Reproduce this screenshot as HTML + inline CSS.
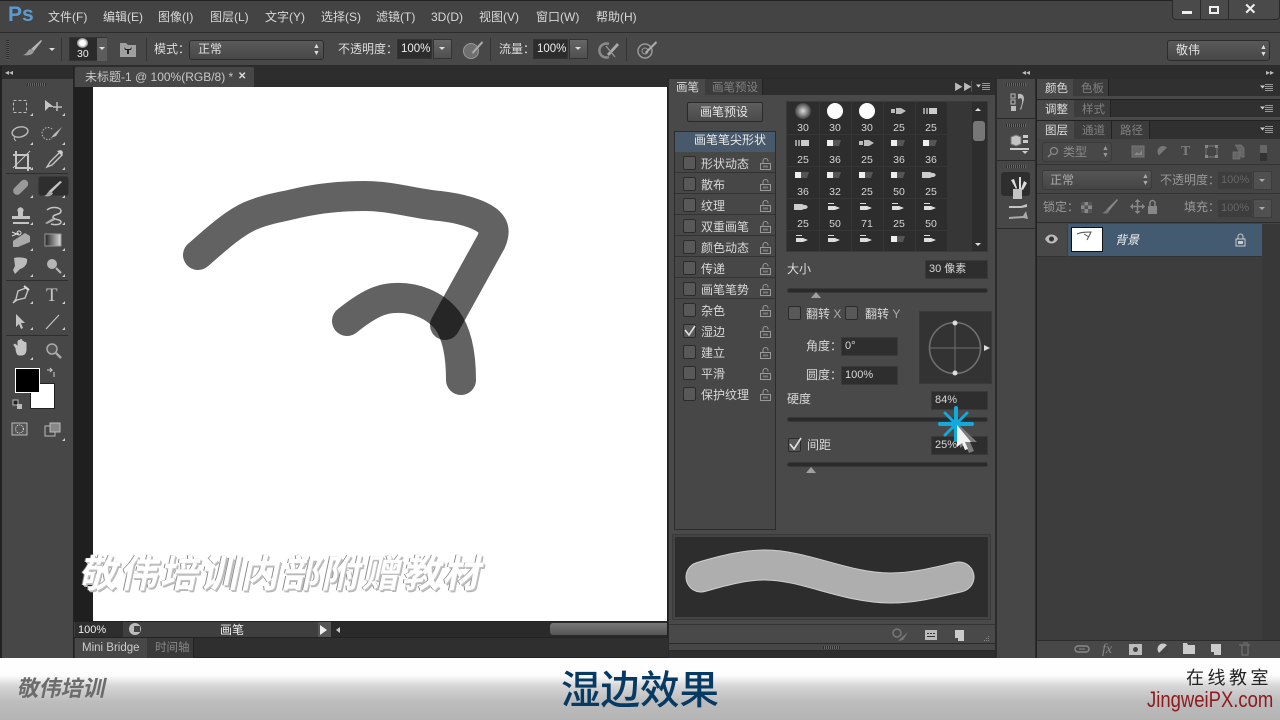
<!DOCTYPE html>
<html><head><meta charset="utf-8"><style>
*{box-sizing:border-box}
html,body{margin:0;padding:0;width:1280px;height:720px;overflow:hidden;background:#474747}
body{position:relative;font-family:"Liberation Sans","Noto Sans CJK SC",sans-serif;font-size:12px;color:#d8d8d8}
.b,.t{position:absolute}
.t{white-space:nowrap;line-height:16px}
.cb{position:absolute;width:13px;height:14px;background:#585858;border:1px solid #2b2b2b;border-radius:2px}
.inp{position:absolute;background:#2e2e2e;border:1px solid #3a3a3a;color:#d8d8d8;padding-left:3px;line-height:17px;font-size:11px;white-space:nowrap}
.sl{position:absolute;height:5px;background:#2a2a2a;border-radius:3px;border:1px solid #383838}
.thumb{position:absolute;width:0;height:0;border-left:5px solid transparent;border-right:5px solid transparent;border-bottom:6px solid #a0a0a0}
svg{position:absolute;overflow:visible}
.lbl{position:absolute;font-size:10.5px;color:#d5d5d5;width:32px;text-align:center;line-height:12px}
.row{position:absolute;left:675px;width:100px;height:21px;border-bottom:1px solid #333}
</style></head><body>

<!-- menu bar -->
<div class="b" style="left:0;top:0;width:1280px;height:33px;background:#444;border-top:1px solid #222;border-bottom:1px solid #2c2c2c"></div>
<div class="t" style="left:8px;top:3px;font-size:21px;line-height:24px;font-weight:bold;color:#5c9bd0">Ps</div>
<div class="t" style="left:48px;top:9px">文件(F)</div>
<div class="t" style="left:103px;top:9px">编辑(E)</div>
<div class="t" style="left:158px;top:9px">图像(I)</div>
<div class="t" style="left:210px;top:9px">图层(L)</div>
<div class="t" style="left:265px;top:9px">文字(Y)</div>
<div class="t" style="left:321px;top:9px">选择(S)</div>
<div class="t" style="left:376px;top:9px">滤镜(T)</div>
<div class="t" style="left:431px;top:9px">3D(D)</div>
<div class="t" style="left:479px;top:9px">视图(V)</div>
<div class="t" style="left:536px;top:9px">窗口(W)</div>
<div class="t" style="left:596px;top:9px">帮助(H)</div>
<div class="b" style="left:1172px;top:0;width:108px;height:20px;background:#4a4a4a;border:1px solid #2a2a2a;border-top:0;border-radius:0 0 4px 4px"></div>
<div class="b" style="left:1200px;top:0;width:1px;height:19px;background:#2a2a2a"></div>
<div class="b" style="left:1228px;top:0;width:1px;height:19px;background:#2a2a2a"></div>
<div class="b" style="left:1182px;top:11px;width:10px;height:3px;background:#eee"></div>
<div class="b" style="left:1209px;top:6px;width:10px;height:8px;border:2px solid #eee"></div>
<div class="t" style="left:1244px;top:2px;font-size:15px;font-weight:bold;color:#eee">✕</div>

<!-- options bar -->
<div class="b" style="left:0;top:33px;width:1280px;height:33px;background:#484848;border-bottom:1px solid #2c2c2c"></div>
<div class="b" style="left:6px;top:40px;width:3px;height:20px;background:repeating-linear-gradient(#2e2e2e 0 1px,#555 1px 2px)"></div>
<svg style="left:0;top:0" width="60" height="66"><path d="M41 40 L31 49 L34 51 L42 41Z" fill="#b5b5b5"/><path d="M30 49 C27 51 27 54 23 55 C28 56 33 55 34 51Z" fill="#9a9a9a"/><path d="M49 48h6l-3 3z" fill="#ddd"/></svg>
<div class="b" style="left:61px;top:38px;width:1px;height:23px;background:#333"></div>
<div class="b" style="left:69px;top:37px;width:38px;height:24px;background:#2a2a2a;border:1px solid #333"></div>
<div class="b" style="left:97px;top:38px;width:10px;height:23px;background:#5c5c5c"></div>
<div class="b" style="left:99px;top:47px;border-left:3px solid transparent;border-right:3px solid transparent;border-top:3px solid #ddd"></div>
<div class="b" style="left:77px;top:38px;width:11px;height:10px;border-radius:50%;background:radial-gradient(#fff 35%,#888 70%,transparent)"></div>
<div class="t" style="left:77px;top:47px;font-size:10.5px;line-height:14px;color:#eee">30</div>
<svg style="left:120px;top:41px" width="16" height="16"><path d="M0 2h6l2 2h8v12H0z" fill="#a0a0a0"/><path d="M4 6l1 3h2v4h2V9h2l1-3-2 2H6z" fill="#222"/></svg>
<div class="b" style="left:146px;top:38px;width:1px;height:23px;background:#333"></div>
<div class="t" style="left:154px;top:41px;color:#ddd">模式：</div>
<div class="b" style="left:189px;top:40px;width:135px;height:20px;background:linear-gradient(#5a5a5a,#474747);border:1px solid #2c2c2c;border-radius:3px"></div>
<div class="t" style="left:198px;top:41px;color:#e0e0e0">正常</div>
<div class="t" style="left:313px;top:43px;font-size:7px;line-height:7px;color:#ddd">▲</div>
<div class="t" style="left:313px;top:50px;font-size:7px;line-height:7px;color:#ddd">▼</div>
<div class="t" style="left:338px;top:41px;color:#ddd">不透明度：</div>
<div class="b" style="left:397px;top:39px;width:35px;height:20px;background:#2c2c2c;border:1px solid #333;line-height:18px;padding-left:3px;font-size:11.5px;color:#eee">100%</div>
<div class="b" style="left:433px;top:39px;width:19px;height:20px;background:linear-gradient(#666,#505050);border:1px solid #333"></div>
<div class="b" style="left:439px;top:47px;border-left:3.5px solid transparent;border-right:3.5px solid transparent;border-top:3px solid #ddd"></div>
<svg style="left:462px;top:40px" width="22" height="20"><circle cx="9" cy="11" r="7.5" fill="#6f6f6f" stroke="#999"/><path d="M20 1L10 12l1 2 10-11z" fill="#aaa"/></svg>
<div class="b" style="left:490px;top:38px;width:1px;height:23px;background:#333"></div>
<div class="t" style="left:499px;top:41px;color:#ddd">流量：</div>
<div class="b" style="left:533px;top:39px;width:35px;height:20px;background:#2c2c2c;border:1px solid #333;line-height:18px;padding-left:3px;font-size:11.5px;color:#eee">100%</div>
<div class="b" style="left:569px;top:39px;width:19px;height:20px;background:linear-gradient(#666,#505050);border:1px solid #333"></div>
<div class="b" style="left:575px;top:47px;border-left:3.5px solid transparent;border-right:3.5px solid transparent;border-top:3px solid #ddd"></div>
<svg style="left:598px;top:40px" width="22" height="20"><path d="M11 4a7 7 0 1 0 0 13" fill="none" stroke="#8a8a8a" stroke-width="2.5"/><path d="M19 3L9 14l2 2 10-11z" fill="#aaa"/><path d="M8 6l9 11" fill="none" stroke="#999" stroke-width="1.2"/></svg>
<div class="b" style="left:626px;top:38px;width:1px;height:23px;background:#333"></div>
<svg style="left:636px;top:40px" width="22" height="20"><circle cx="9" cy="11" r="7" fill="none" stroke="#999" stroke-width="1.5"/><circle cx="9" cy="11" r="3" fill="none" stroke="#999"/><path d="M20 1L9 12l1 2 11-11z" fill="#aaa"/></svg>
<div class="b" style="left:1167px;top:40px;width:103px;height:21px;background:linear-gradient(#5a5a5a,#474747);border:1px solid #2c2c2c;border-radius:3px"></div>
<div class="t" style="left:1176px;top:42px;color:#e0e0e0">敬伟</div>
<div class="t" style="left:1260px;top:44px;font-size:7px;line-height:7px;color:#ddd">▲</div>
<div class="t" style="left:1260px;top:51px;font-size:7px;line-height:7px;color:#ddd">▼</div>

<!-- doc area -->
<div class="b" style="left:0;top:66px;width:1280px;height:592px;background:#1f1f1f"></div>
<div class="b" style="left:74px;top:66px;width:922px;height:21px;background:#2d2d2d"></div>
<div class="b" style="left:75px;top:67px;width:179px;height:20px;background:#474747;border-radius:2px 2px 0 0"></div>
<div class="t" style="left:85px;top:69px;color:#c8c8c8">未标题-1 @ 100%(RGB/8) *</div>
<div class="t" style="left:238px;top:69px;font-size:10px;color:#ddd;font-weight:bold">✕</div>
<div class="b" style="left:93px;top:87px;width:574px;height:535px;background:#fff"></div>
<svg style="left:0;top:0" width="1280" height="720">
<g fill="none" stroke-linecap="round" stroke-linejoin="round" stroke-width="30" style="isolation:isolate">
<path style="mix-blend-mode:multiply" stroke="#626262" d="M198 255C212 243 232 224 250 216C266 209 282 207 298 203C320 198 342 196 365 196C392 196 416 204 440 206C458 208 478 213 488 221C495 227 495 233 491 242L445 325"/>
<path style="mix-blend-mode:multiply" stroke="#626262" d="M347 321C362 309 378 298 395 298C415 297 435 305 447 320C458 335 461 358 461 380"/>
</g></svg>
<div class="t" style="left:81px;top:551px;font-size:38px;line-height:48px;font-weight:bold;letter-spacing:2.4px;color:#fff;transform:skewX(-12deg);text-shadow:1px 1px 0 #c4c4c4,2px 2px 0 #b4b4b4,-1px 0 0 #8a8a8a">敬伟培训内部附赠教材</div>

<!-- status bar -->
<div class="b" style="left:74px;top:621px;width:593px;height:17px;background:#3f3f3f;border-top:1px solid #222;border-bottom:1px solid #222"></div>
<div class="b" style="left:75px;top:622px;width:48px;height:15px;background:#2e2e2e"></div>
<div class="t" style="left:78px;top:623px;font-size:11px;line-height:15px;color:#eee">100%</div>
<div class="b" style="left:129px;top:623px;width:12px;height:12px;border-radius:50%;background:#bdbdbd"></div>
<div class="b" style="left:134px;top:626px;width:6px;height:6px;background:#444"></div>
<div class="t" style="left:220px;top:622px;color:#eee">画笔</div>
<div class="b" style="left:318px;top:622px;width:13px;height:15px;background:#555"></div>
<div class="b" style="left:320px;top:625px;border-top:5px solid transparent;border-bottom:5px solid transparent;border-left:7px solid #eee"></div>
<div class="b" style="left:331px;top:622px;width:336px;height:15px;background:#2a2a2a"></div>
<div class="b" style="left:336px;top:627px;border-top:3px solid transparent;border-bottom:3px solid transparent;border-right:4px solid #ccc"></div>
<div class="b" style="left:550px;top:623px;width:117px;height:12px;background:linear-gradient(#777,#555);border-radius:3px 0 0 3px"></div>
<div class="b" style="left:74px;top:638px;width:922px;height:20px;background:#2f2f2f;border-bottom:1px solid #222"></div>
<div class="b" style="left:75px;top:638px;width:72px;height:20px;background:#474747"></div>
<div class="t" style="left:82px;top:641px;font-size:11.5px;line-height:15px;color:#ccc">Mini Bridge</div>
<div class="b" style="left:147px;top:638px;width:47px;height:20px;background:#3a3a3a;border-right:1px solid #222"></div>
<div class="t" style="left:155px;top:641px;font-size:11.5px;line-height:15px;color:#888">时间轴</div>

<!-- toolbar -->
<div class="b" style="left:0;top:66px;width:74px;height:592px;background:#474747;border-right:1px solid #222"></div>
<div class="b" style="left:0;top:66px;width:73px;height:13px;background:#2d2d2d"></div>
<div class="b" style="left:0;top:66px;width:2px;height:592px;background:#222"></div>
<div class="t" style="left:5px;top:67px;font-size:8px;line-height:11px;color:#bbb">◂◂</div>
<div class="b" style="left:27px;top:83px;width:19px;height:3px;background:repeating-linear-gradient(90deg,#2e2e2e 0 1px,#666 1px 2px)"></div>
<div class="b" style="left:38px;top:176px;width:31px;height:20px;background:#2e2e2e;border-radius:3px;border:1px solid #3a3a3a"></div>
<div class="b" style="left:6px;top:173px;width:62px;height:1px;background:#2e2e2e"></div>
<div class="b" style="left:6px;top:280px;width:62px;height:1px;background:#2e2e2e"></div>
<div class="b" style="left:6px;top:335px;width:62px;height:1px;background:#2e2e2e"></div>
<svg style="left:0;top:0" width="74" height="660">
<rect x="13.500" y="100.500" width="13" height="12" fill="none" stroke="#bbb" stroke-dasharray="3 2"/>
<path d="M45 100l9 7h-5l-4 4z" fill="#c4c4c4"/><path d="M57 102v9M53 107h9" stroke="#bbb" stroke-width="1.5"/>
<ellipse cx="20" cy="132" rx="8" ry="5" fill="none" stroke="#bbb" stroke-width="1.4" transform="rotate(-12 20 132)"/><path d="M15 136q-2 3 1 5" fill="none" stroke="#bbb"/>
<path d="M52 129a6 6 0 1 0 0 9" fill="none" stroke="#bbb" stroke-dasharray="1.5 1.5"/><path d="M62 127l-8 7-3 4 5-2z" fill="#bbb"/>
<path d="M16 151v17h15M13 155h15v16" fill="none" stroke="#c4c4c4" stroke-width="2"/><path d="M13 168l17-17" stroke="#c4c4c4"/>
<path d="M60 152l-10 10-3 5 5-2 10-10z" fill="none" stroke="#c4c4c4" stroke-width="1.4"/><path d="M57 151l4-1 2 2-1 4z" fill="#ccc"/>
<rect x="12" y="184" width="18" height="8" rx="4" transform="rotate(-45 20 188)" fill="#999"/>
<path d="M60 181L49 191l2 2 11-11z" fill="#c4c4c4"/><path d="M49 191c-2 2-2 4-5 5 4 1 8 0 9-3z" fill="#aaa"/>
<path d="M13 222h16v2H13zM12 216h18v3H12z" fill="#c4c4c4"/><path d="M18 216v-4a3 3 0 1 1 5 0v4z" fill="#c4c4c4"/>
<path d="M47 210c4-4 14-3 14 1s-8 3-8 6 8 2 8 5-6 3-10 2" fill="none" stroke="#c4c4c4" stroke-width="1.5"/><path d="M53 218l-8 5 2 1 8-4z" fill="#aaa"/>
<path d="M13 241l12-8 5 3v6l-12 5h-5z" fill="#aaa"/><path d="M12 232l7 3M12 236l7-3" stroke="#ddd"/><circle cx="19" cy="233" r="2" fill="none" stroke="#ddd"/>
<defs><linearGradient id="g" x1="0" x2="1"><stop offset="0" stop-color="#222"/><stop offset="1" stop-color="#ddd"/></linearGradient></defs>
<rect x="45" y="234" width="16" height="12" fill="url(#g)" stroke="#999"/>
<path d="M14 258c3-1 10-1 13 1 1 5-3 9-7 10l-5 5-2-4 2-4z" fill="#bbb"/>
<circle cx="52" cy="264" r="5" fill="#b5b5b5"/><path d="M56 268l5 5" stroke="#bbb" stroke-width="2"/>
<path d="M26 288l2 2-3 8-8 2-4 3 3-4 2-8z" fill="none" stroke="#c4c4c4" stroke-width="1.4"/><path d="M24 286l5 4" stroke="#ddd" stroke-width="2"/>
<path d="M16 314l9 9h-4l2 5-2 1-2-5-3 3z" fill="#c4c4c4"/>
<path d="M46 329l13-14" stroke="#c4c4c4" stroke-width="1.2"/>
<path d="M16 348l-2-3c0-1 1-1 2 0l2 2v-5c0-2 2-2 2 0v-1c0-2 2-2 2 0v1c0-1 2-1 2 1 1-1 2-1 2 1v6c0 3-2 5-4 5h-3c-2 0-3-4-3-7z" fill="#c4c4c4" stroke="#c4c4c4"/>
<circle cx="52" cy="349" r="5" fill="#555" stroke="#aaa" stroke-width="1.5"/><path d="M56 353l5 5" stroke="#aaa" stroke-width="2.4"/>
<path d="M47 370h5l-2-2m2 2l-2 2M54 377v-5" fill="none" stroke="#ccc" stroke-width="1"/>
<rect x="13" y="400" width="5" height="5" fill="#222" stroke="#bbb"/><rect x="17" y="404" width="5" height="5" fill="#bbb"/>
<rect x="12" y="423" width="15" height="12" fill="#555" stroke="#bbb"/><circle cx="19.500" cy="429" r="4" fill="none" stroke="#ddd" stroke-dasharray="1 1"/>
<rect x="45" y="426" width="10" height="10" fill="none" stroke="#bbb"/><rect x="50" y="423" width="10" height="9" fill="#888" stroke="#bbb"/>
<g fill="#ccc"><path d="M33 116h-3l3-3zM65 116h-3l3-3zM33 145h-3l3-3zM65 145h-3l3-3zM33 170h-3l3-3zM65 170h-3l3-3zM33 198h-3l3-3zM65 198h-3l3-3zM33 225h-3l3-3zM65 225h-3l3-3zM33 251h-3l3-3zM65 251h-3l3-3zM33 277h-3l3-3zM65 277h-3l3-3zM33 304h-3l3-3zM65 304h-3l3-3zM33 330h-3l3-3zM65 330h-3l3-3zM33 360h-3l3-3zM65 441h-3l3-3z"/></g>
</svg>
<div class="t" style="left:46px;top:286px;font-family:'Liberation Serif',serif;font-size:19px;line-height:20px;color:#c4c4c4">T</div>
<div class="b" style="left:30px;top:383px;width:25px;height:26px;background:#fff;border:1px solid #222"></div>
<div class="b" style="left:15px;top:368px;width:25px;height:25px;background:#000;border:1px solid #fff"></div>

<!-- brush panel -->
<div class="b" style="left:668px;top:78px;width:328px;height:580px;background:#494949;border:1px solid #2a2a2a"></div>
<div class="b" style="left:669px;top:79px;width:326px;height:16px;background:#2e2e2e"></div>
<div class="b" style="left:669px;top:79px;width:36px;height:16px;background:#494949"></div>
<div class="b" style="left:705px;top:79px;width:58px;height:16px;background:#3c3c3c;border-right:1px solid #222"></div>
<div class="t" style="left:676px;top:80px;font-size:11.5px;color:#ddd">画笔</div>
<div class="t" style="left:712px;top:80px;font-size:11.5px;color:#808080">画笔预设</div>
<div class="t" style="left:954px;top:81px;font-size:9px;line-height:12px;color:#bbb">▶▶</div>
<div class="b" style="left:971px;top:81px;width:1px;height:11px;background:#555"></div>
<svg style="left:976px;top:82px" width="16" height="10"><path d="M0 2.500h5l-2.500 3z" fill="#ccc"/><path d="M6 1.500h8M6 3.500h8M6 5.500h8M6 7.500h8" stroke="#bbb" stroke-width=".8"/></svg>

<div class="b" style="left:687px;top:102px;width:76px;height:20px;background:linear-gradient(#5e5e5e,#4a4a4a);border:1px solid #2a2a2a;border-radius:2px"></div>
<div class="t" style="left:700px;top:104px;color:#e4e4e4">画笔预设</div>

<div class="b" style="left:674px;top:131px;width:102px;height:399px;background:#474747;border:1px solid #2c2c2c"></div>
<div class="b" style="left:675px;top:132px;width:100px;height:20px;background:#47596b"></div>
<div class="t" style="left:694px;top:132px;color:#e8e8e8">画笔笔尖形状</div>
<div class="row" style="top:152px"></div><div class="row" style="top:173px"></div><div class="row" style="top:194px"></div><div class="row" style="top:215px"></div><div class="row" style="top:236px"></div><div class="row" style="top:257px"></div><div class="row" style="top:278px"></div>

<div class="cb" style="left:683px;top:156px"></div><div class="t" style="left:701px;top:156px">形状动态</div>
<div class="cb" style="left:683px;top:177px"></div><div class="t" style="left:701px;top:177px">散布</div>
<div class="cb" style="left:683px;top:198px"></div><div class="t" style="left:701px;top:198px">纹理</div>
<div class="cb" style="left:683px;top:219px"></div><div class="t" style="left:701px;top:219px">双重画笔</div>
<div class="cb" style="left:683px;top:240px"></div><div class="t" style="left:701px;top:240px">颜色动态</div>
<div class="cb" style="left:683px;top:261px"></div><div class="t" style="left:701px;top:261px">传递</div>
<div class="cb" style="left:683px;top:282px"></div><div class="t" style="left:701px;top:282px">画笔笔势</div>
<div class="cb" style="left:683px;top:303px"></div><div class="t" style="left:701px;top:303px">杂色</div>
<div class="cb" style="left:683px;top:324px"></div><div class="t" style="left:701px;top:324px">湿边</div>
<div class="cb" style="left:683px;top:345px"></div><div class="t" style="left:701px;top:345px">建立</div>
<div class="cb" style="left:683px;top:366px"></div><div class="t" style="left:701px;top:366px">平滑</div>
<div class="cb" style="left:683px;top:387px"></div><div class="t" style="left:701px;top:387px">保护纹理</div>
<svg style="left:0;top:0" width="1000" height="660">
<defs><g id="lk"><rect x=".5" y="5.500" width="10" height="6" fill="none" stroke="#999"/><path d="M3 5.500V3a2.500 2.500 0 0 1 5 0v.5" fill="none" stroke="#999"/><rect x="3" y="7.500" width="5" height="2" fill="#777"/></g></defs>
<use href="#lk" x="760" y="158"/><use href="#lk" x="760" y="179"/><use href="#lk" x="760" y="200"/><use href="#lk" x="760" y="221"/><use href="#lk" x="760" y="242"/><use href="#lk" x="760" y="263"/><use href="#lk" x="760" y="284"/><use href="#lk" x="760" y="305"/><use href="#lk" x="760" y="326"/><use href="#lk" x="760" y="347"/><use href="#lk" x="760" y="368"/><use href="#lk" x="760" y="389"/>
<path d="M685 330l4 5 6-9" fill="none" stroke="#ddd" stroke-width="1.6"/>
</svg>

<!-- brush grid -->
<div class="b" style="left:786px;top:101px;width:202px;height:151px;background:#2d2d2d;border:1px solid #3a3a3a"></div>
<div class="b" style="left:947px;top:102px;width:25px;height:149px;background:#363636"></div>
<div class="b" style="left:973px;top:121px;width:12px;height:20px;background:#777;border-radius:3px"></div>
<div class="b" style="left:975px;top:108px;border-left:3px solid transparent;border-right:3px solid transparent;border-bottom:3px solid #ddd"></div>
<div class="b" style="left:975px;top:243px;border-left:3.5px solid transparent;border-right:3.5px solid transparent;border-top:3.5px solid #ddd"></div>
<svg style="left:0;top:0" width="1000" height="260">
<g stroke="#363636"><path d="M787 134.500h160M787 166.500h160M787 198.500h160M787 230.500h160M819.500 102v149M851.500 102v149M883.500 102v149M915.500 102v149"/></g>
<defs><radialGradient id="sf"><stop offset="0" stop-color="#ddd"/><stop offset="1" stop-color="#444"/></radialGradient>
<g id="p1"><path d="M-8-2h4v4h-4zM-3-3h5l5 3-5 3h-5z" fill="#bbb"/></g>
<g id="p2"><path d="M-8-3h2v6h-2zM-5-3h2v6h-2z" fill="#999"/><rect x="-2" y="-3" width="8" height="6" fill="#ccc"/></g>
<g id="p3"><path d="M-8-3h6v6h-6z" fill="#eee"/><path d="M-2-3h8l-2 6h-6z" fill="#555"/></g>
<g id="p4"><path d="M-9-3h8l2 1h2l2 2-2 2h-2l-2 1h-8z" fill="#ccc"/></g>
<g id="p5"><path d="M-7-4h6v1h-6zM-7-1h7l5 2-5 2h-7z" fill="#ddd"/></g></defs>
<circle cx="803" cy="111" r="8" fill="url(#sf)"/><circle cx="835" cy="111" r="8" fill="#fff"/><circle cx="867" cy="111" r="8" fill="#fff"/>
<use href="#p1" x="899" y="111"/><use href="#p2" x="931" y="111"/>
<use href="#p2" x="803" y="143"/><use href="#p3" x="835" y="143"/><use href="#p1" x="867" y="143"/><use href="#p3" x="899" y="143"/><use href="#p3" x="931" y="143"/>
<use href="#p3" x="803" y="175"/><use href="#p3" x="835" y="175"/><use href="#p3" x="867" y="175"/><use href="#p3" x="899" y="175"/><use href="#p4" x="931" y="175"/>
<use href="#p4" x="803" y="207"/><use href="#p5" x="835" y="207"/><use href="#p5" x="867" y="207"/><use href="#p5" x="899" y="207"/><use href="#p5" x="931" y="207"/>
<use href="#p5" x="803" y="239"/><use href="#p5" x="835" y="239"/><use href="#p5" x="867" y="239"/><use href="#p3" x="899" y="239"/><use href="#p5" x="931" y="239"/>
</svg>
<div class="lbl" style="left:787px;top:122px">30</div><div class="lbl" style="left:819px;top:122px">30</div><div class="lbl" style="left:851px;top:122px">30</div><div class="lbl" style="left:883px;top:122px">25</div><div class="lbl" style="left:915px;top:122px">25</div>
<div class="lbl" style="left:787px;top:154px">25</div><div class="lbl" style="left:819px;top:154px">36</div><div class="lbl" style="left:851px;top:154px">25</div><div class="lbl" style="left:883px;top:154px">36</div><div class="lbl" style="left:915px;top:154px">36</div>
<div class="lbl" style="left:787px;top:186px">36</div><div class="lbl" style="left:819px;top:186px">32</div><div class="lbl" style="left:851px;top:186px">25</div><div class="lbl" style="left:883px;top:186px">50</div><div class="lbl" style="left:915px;top:186px">25</div>
<div class="lbl" style="left:787px;top:218px">25</div><div class="lbl" style="left:819px;top:218px">50</div><div class="lbl" style="left:851px;top:218px">71</div><div class="lbl" style="left:883px;top:218px">25</div><div class="lbl" style="left:915px;top:218px">50</div>

<!-- brush settings -->
<div class="t" style="left:787px;top:261px;color:#ddd">大小</div>
<div class="inp" style="left:925px;top:260px;width:63px;height:19px">30 像素</div>
<div class="sl" style="left:787px;top:288px;width:201px"></div><div class="thumb" style="left:811px;top:292px"></div>
<div class="cb" style="left:788px;top:306px"></div><div class="t" style="left:806px;top:306px">翻转 <span style="color:#aaa">X</span></div>
<div class="cb" style="left:845px;top:306px"></div><div class="t" style="left:865px;top:306px">翻转 <span style="color:#aaa">Y</span></div>
<div class="b" style="left:919px;top:311px;width:73px;height:73px;background:#333;border:1px solid #3a3a3a"></div>
<svg style="left:919px;top:311px" width="73" height="73"><circle cx="36" cy="37" r="25.500" fill="none" stroke="#6f6f6f" stroke-width="1.6"/><path d="M11 37h50M36 12v50" stroke="#6f6f6f"/><circle cx="36" cy="12" r="2.500" fill="#ddd"/><circle cx="36" cy="62" r="2.500" fill="#ddd"/><path d="M65 34l6 3-6 3z" fill="#ddd"/></svg>
<div class="t" style="left:806px;top:338px">角度：</div><div class="inp" style="left:841px;top:337px;width:57px;height:19px">0°</div>
<div class="t" style="left:806px;top:367px">圆度：</div><div class="inp" style="left:841px;top:366px;width:57px;height:19px">100%</div>
<div class="t" style="left:787px;top:391px">硬度</div><div class="inp" style="left:931px;top:391px;width:57px;height:19px">84%</div>
<div class="sl" style="left:787px;top:417px;width:201px"></div>
<div class="cb" style="left:788px;top:438px"></div>
<svg style="left:788px;top:436px" width="16" height="16"><path d="M2 8l4 5 7-11" fill="none" stroke="#ddd" stroke-width="1.7"/></svg>
<div class="t" style="left:807px;top:437px">间距</div><div class="inp" style="left:931px;top:436px;width:57px;height:19px">25%</div>
<div class="sl" style="left:787px;top:462px;width:201px"></div><div class="thumb" style="left:806px;top:467px"></div>
<svg style="left:930px;top:400px" width="60" height="60">
<g stroke="#12a9dd" stroke-linecap="round"><path d="M26 8v32M10 24h32" stroke-width="4"/><path d="M15 13l22 22M37 13L15 35" stroke-width="3"/></g>
<path d="M27 25v22l5-4 4 9 5-2-4-9h7z" fill="#7c7c7c" transform="translate(3,1)"/><path d="M27 25v22l5-4 3 7 3-1-3-7h6z" fill="#f2f2f2"/>
</svg>

<!-- preview -->
<div class="b" style="left:673px;top:535px;width:317px;height:84px;background:#2d2d2d;border:2px solid #444;outline:1px solid #3a3a3a"></div>
<svg style="left:0;top:0" width="1000" height="660"><path d="M701 577C725 570 745 565 765 565C805 565 845 588 891 588C915 588 937 582 959 577" fill="none" stroke="#d0d0d0" stroke-width="31" stroke-linecap="round"/><path d="M701 577C725 570 745 565 765 565C805 565 845 588 891 588C915 588 937 582 959 577" fill="none" stroke="#aeaeae" stroke-width="29" stroke-linecap="round"/></svg>
<div class="b" style="left:669px;top:624px;width:326px;height:1px;background:#333"></div>
<div class="b" style="left:669px;top:643px;width:326px;height:8px;background:#474747;border-top:1px solid #2a2a2a;border-bottom:1px solid #2a2a2a"></div>
<div class="b" style="left:669px;top:651px;width:326px;height:7px;background:#2f2f2f"></div>
<div class="b" style="left:823px;top:646px;width:17px;height:3px;background:repeating-linear-gradient(90deg,#2e2e2e 0 1px,#666 1px 2px)"></div>
<svg style="left:0;top:0" width="1000" height="660">
<circle cx="897" cy="633" r="4" fill="none" stroke="#777" stroke-width="1.5"/><path d="M908 632l-7 6-3 3 5-1z" fill="#777"/>
<rect x="925" y="630" width="12" height="10" fill="#bbb"/><path d="M927 633h2v1h-2zM930 633h2v1h-2zM933 633h2v1h-2zM927 636h8v1h-8z" fill="#333"/>
<path d="M955 630h9v11h-6v-3h-3z" fill="#ccc"/>
<path d="M988 640h1v1h-1zM986 640h1v1h-1zM984 640h1v1h-1zM988 638h1v1h-1zM986 638h1v1h-1zM988 636h1v1h-1z" fill="#888"/>
</svg>

<!-- right dock -->
<div class="b" style="left:996px;top:66px;width:284px;height:592px;background:#2d2d2d"></div>
<div class="b" style="left:997px;top:79px;width:38px;height:579px;background:#474747"></div>
<div class="b" style="left:997px;top:118px;width:38px;height:1px;background:#2a2a2a"></div>
<div class="b" style="left:997px;top:160px;width:38px;height:1px;background:#2a2a2a"></div>
<div class="b" style="left:997px;top:228px;width:38px;height:1px;background:#2a2a2a"></div>
<div class="t" style="left:1022px;top:67px;font-size:8px;line-height:11px;color:#bbb">◂◂</div>
<div class="t" style="left:1266px;top:67px;font-size:8px;line-height:11px;color:#bbb">▸▸</div>
<div class="b" style="left:1006px;top:83px;width:20px;height:3px;background:repeating-linear-gradient(90deg,#2e2e2e 0 1px,#666 1px 2px)"></div>
<div class="b" style="left:1006px;top:124px;width:20px;height:3px;background:repeating-linear-gradient(90deg,#2e2e2e 0 1px,#666 1px 2px)"></div>
<div class="b" style="left:1006px;top:165px;width:20px;height:3px;background:repeating-linear-gradient(90deg,#2e2e2e 0 1px,#666 1px 2px)"></div>
<div class="b" style="left:1001px;top:172px;width:29px;height:24px;background:#2e2e2e;border-radius:3px"></div>
<svg style="left:996px;top:60px" width="40" height="170">
<path d="M15 34h4v4h-4zM15 40h4v4h-4z" fill="none" stroke="#bbb"/><rect x="15" y="46" width="5" height="5" fill="#bbb"/><path d="M22 34c6-1 7 4 5 9l-2 7-1-1c2-4 3-9 1-11l-3 1z" fill="#bbb"/>
<path d="M15 77l5-2 5 2v7l-5 2-5-2z" fill="#c4c4c4" stroke="#777"/><path d="M27 75h5v3h-5zM27 80h5v3h-5z" fill="#ccc"/><rect x="14" y="88" width="19" height="2" fill="#ccc"/><path d="M26 91h6l-3 3z" fill="#ccc"/>
<path d="M17 129h9v10h-9z" fill="#c4c4c4"/><path d="M20 129l-5-9 3-1 3 9zM23 129v-12h2v12zM25 129l3-8 3 2-4 7z" fill="#ddd"/>
<path d="M13 146h12l6-2v3l-6 1H13z" fill="#c4c4c4"/><path d="M13 157l14-1 3-5 2 8-5-1-14 1z" fill="#aaa"/>
</svg>

<!-- right panels -->
<div class="b" style="left:1036px;top:79px;width:244px;height:579px;background:#454545;border-left:1px solid #222"></div>
<div class="b" style="left:1037px;top:79px;width:243px;height:17px;background:#303030"></div>
<div class="b" style="left:1037px;top:100px;width:243px;height:17px;background:#303030"></div>
<div class="b" style="left:1037px;top:121px;width:243px;height:18px;background:#303030"></div>
<div class="b" style="left:1037px;top:96px;width:243px;height:4px;background:#494949;border-bottom:1px solid #222"></div>
<div class="b" style="left:1037px;top:117px;width:243px;height:4px;background:#494949;border-bottom:1px solid #222"></div>
<div class="b" style="left:1037px;top:79px;width:36px;height:17px;background:#494949"></div>
<div class="b" style="left:1073px;top:79px;width:36px;height:17px;background:#3c3c3c;border-right:1px solid #222"></div>
<div class="b" style="left:1037px;top:100px;width:37px;height:17px;background:#494949"></div>
<div class="b" style="left:1074px;top:100px;width:37px;height:17px;background:#3c3c3c;border-right:1px solid #222"></div>
<div class="b" style="left:1037px;top:121px;width:37px;height:18px;background:#494949"></div>
<div class="b" style="left:1074px;top:121px;width:38px;height:18px;background:#3c3c3c;border-right:1px solid #222"></div>
<div class="b" style="left:1112px;top:121px;width:38px;height:18px;background:#3c3c3c;border-right:1px solid #222"></div>
<div class="t" style="left:1045px;top:81px;font-size:11.5px;color:#ddd">颜色</div><div class="t" style="left:1081px;top:81px;font-size:11.5px;color:#808080">色板</div>
<div class="t" style="left:1045px;top:102px;font-size:11.5px;color:#ddd">调整</div><div class="t" style="left:1082px;top:102px;font-size:11.5px;color:#808080">样式</div>
<div class="t" style="left:1045px;top:123px;font-size:11.5px;color:#ddd">图层</div><div class="t" style="left:1082px;top:123px;font-size:11.5px;color:#808080">通道</div><div class="t" style="left:1120px;top:123px;font-size:11.5px;color:#808080">路径</div>
<svg style="left:1258px;top:83px" width="20" height="56"><g id="mn"><path d="M2 2.500h5l-2.500 3z" fill="#ccc"/><path d="M7 1.500h8M7 3.500h8M7 5.500h8M7 7.500h8" stroke="#bbb" stroke-width=".8"/></g><use href="#mn" y="21"/><use href="#mn" y="42"/></svg>

<div class="b" style="left:1037px;top:139px;width:243px;height:26px;border-bottom:1px solid #333"></div>
<div class="b" style="left:1042px;top:142px;width:70px;height:20px;background:#484848;border:1px solid #3a3a3a;border-radius:3px"></div>
<svg style="left:1047px;top:146px" width="12" height="12"><circle cx="7" cy="5" r="3.500" fill="none" stroke="#888" stroke-width="1.3"/><path d="M4 8L1 11" stroke="#888" stroke-width="1.500"/></svg>
<div class="t" style="left:1063px;top:144px;color:#8a8a8a">类型</div>
<div class="t" style="left:1102px;top:145px;font-size:7px;line-height:7px;color:#999">▲</div><div class="t" style="left:1102px;top:152px;font-size:7px;line-height:7px;color:#999">▼</div>
<svg style="left:1130px;top:143px" width="140" height="20">
<rect x="2" y="3" width="12" height="11" fill="#666" stroke="#777"/><path d="M4 12l3-3 2 2 3-4v5z" fill="#888"/>
<circle cx="33" cy="8.500" r="5.500" fill="#777"/><path d="M29 12.500l8-8a5.500 5.500 0 0 1-8 8z" fill="#444"/>
<rect x="76" y="3" width="11" height="11" fill="none" stroke="#777"/><rect x="75" y="2" width="3" height="3" fill="#888"/><rect x="85" y="2" width="3" height="3" fill="#888"/><rect x="75" y="12" width="3" height="3" fill="#888"/><rect x="85" y="12" width="3" height="3" fill="#888"/>
<path d="M105 9h5v7h-7V9zM105 2h6l3 3v9h-3" fill="#666" stroke="#777" stroke-width=".7"/>
<rect x="130" y="2" width="7" height="16" fill="#333"/><rect x="130" y="2" width="7" height="8" fill="#666"/>
</svg>
<div class="t" style="left:1181px;top:144px;font-family:'Liberation Serif',serif;font-weight:bold;font-size:14px;color:#7c7c7c">T</div>

<div class="b" style="left:1037px;top:165px;width:243px;height:29px;border-bottom:1px solid #333"></div>
<div class="b" style="left:1042px;top:170px;width:110px;height:20px;background:linear-gradient(#555,#454545);border:1px solid #3a3a3a;border-radius:3px"></div>
<div class="t" style="left:1050px;top:172px;color:#aaa">正常</div>
<div class="t" style="left:1142px;top:173px;font-size:7px;line-height:7px;color:#aaa">▲</div><div class="t" style="left:1142px;top:180px;font-size:7px;line-height:7px;color:#aaa">▼</div>
<div class="t" style="left:1160px;top:172px;color:#999">不透明度：</div>
<div class="b" style="left:1217px;top:171px;width:36px;height:19px;background:#3d3d3d;border:1px solid #444;color:#666;line-height:17px;padding-left:3px;font-size:11px">100%</div>
<div class="b" style="left:1253px;top:171px;width:19px;height:19px;background:#505050;border:1px solid #3c3c3c"></div>
<div class="b" style="left:1259px;top:179px;border-left:3px solid transparent;border-right:3px solid transparent;border-top:3px solid #aaa"></div>

<div class="b" style="left:1037px;top:194px;width:243px;height:29px;border-bottom:1px solid #2c2c2c"></div>
<div class="t" style="left:1043px;top:199px;color:#999">锁定：</div>
<svg style="left:1080px;top:198px" width="80" height="18">
<rect x="1" y="4" width="11" height="11" fill="#888"/><path d="M1 4h3.500v3.500H1zM8 4h4v3.500H8zM4.500 7.500H8V11H4.500zM1 11h3.500v4H1zM8 11h4v4H8z" fill="#555"/>
<path d="M37 1L27 11l2 2 9-11z" fill="#888"/><path d="M27 11c-2 2-2 3-5 4 3 1 7 1 7-2z" fill="#777"/>
<path d="M51 8.500h13M57.500 2v13" stroke="#888" stroke-width="1.500"/><path d="M57.500 1l3 3h-6zM57.500 16l3-3h-6zM50 8.500l3-3v6zM65 8.500l-3-3v6z" fill="#888"/>
<rect x="68" y="8" width="9" height="8" fill="#888"/><path d="M70 8V5a2.500 2.500 0 0 1 5 0v3" fill="none" stroke="#888" stroke-width="1.500"/>
</svg>
<div class="t" style="left:1184px;top:199px;color:#999">填充：</div>
<div class="b" style="left:1217px;top:199px;width:36px;height:19px;background:#3d3d3d;border:1px solid #444;color:#666;line-height:17px;padding-left:3px;font-size:11px">100%</div>
<div class="b" style="left:1253px;top:199px;width:19px;height:19px;background:#505050;border:1px solid #3c3c3c"></div>
<div class="b" style="left:1259px;top:207px;border-left:3px solid transparent;border-right:3px solid transparent;border-top:3px solid #aaa"></div>

<div class="b" style="left:1037px;top:224px;width:243px;height:416px;background:#3d3d3d"></div>
<div class="b" style="left:1262px;top:224px;width:18px;height:416px;background:#383838"></div>
<div class="b" style="left:1037px;top:224px;width:30px;height:33px;background:#484848;border-bottom:1px solid #333"></div>
<div class="b" style="left:1068px;top:224px;width:194px;height:33px;background:#435a70;border-bottom:1px solid #333"></div>
<svg style="left:1045px;top:234px" width="14" height="10"><path d="M0 5c3-6 10-6 13 0c-3 6-10 6-13 0z" fill="#bbb"/><circle cx="6.500" cy="5" r="2.500" fill="#333"/></svg>
<div class="b" style="left:1071px;top:227px;width:32px;height:25px;background:#fff;border:1px solid #111"></div>
<svg style="left:1071px;top:227px" width="32" height="25"><path d="M6 7c4-2 9-2 14-2l-4 8M13 7l5 3" fill="none" stroke="#555"/></svg>
<div class="t" style="left:1115px;top:232px;font-style:italic;color:#eee">背景</div>
<svg style="left:1235px;top:233px" width="11" height="14"><rect x="1" y="6" width="9" height="7" fill="none" stroke="#ccc"/><path d="M3 6V3.500a2.500 2.500 0 0 1 5 0V6" fill="none" stroke="#ccc"/><rect x="3" y="8" width="5" height="3" fill="#ccc"/></svg>
<div class="b" style="left:1037px;top:640px;width:243px;height:18px;background:#484848;border-top:1px solid #2c2c2c"></div>
<svg style="left:1070px;top:640px" width="190" height="18">
<rect x="5" y="6" width="14" height="6" rx="3" fill="none" stroke="#888" stroke-width="1.4"/><path d="M9 9h6" stroke="#888"/>
<rect x="59" y="4" width="13" height="11" fill="#bbb"/><circle cx="65.500" cy="9.500" r="2.500" fill="#444"/>
<circle cx="93" cy="9" r="5.500" fill="#ccc"/><path d="M89 13l8-8a5.500 5.500 0 0 1-8 8z" fill="#444"/>
<path d="M113 3h4l1 2h7v9h-12z" fill="#ccc"/>
<path d="M141 4h10v11h-7v-3h-3z" fill="#ccc"/>
<path d="M169 5h11M172 5v10h6V5M173 3h5" fill="none" stroke="#777"/>
</svg>
<div class="t" style="left:1102px;top:642px;font-family:'Liberation Serif',serif;font-style:italic;font-size:14px;color:#888">fx</div>

<!-- banner -->
<div class="b" style="left:0;top:658px;width:1280px;height:62px;background:linear-gradient(#fff 0,#fdfdfd 28%,#d6d6d6 45%,#bdbdbd 70%,#b4b4b4 100%)"></div>
<div class="t" style="left:18px;top:674px;font-size:22px;line-height:30px;font-weight:bold;color:#6c6c6c;transform:skewX(-12deg)">敬伟培训</div>
<div class="t" style="left:561px;top:666px;font-size:39.500px;line-height:50px;color:#063a63;font-weight:500">湿边效果</div>
<div class="t" style="left:1186px;top:667px;font-size:18px;line-height:22px;letter-spacing:3.500px;color:#222">在线教室</div>
<div class="t" style="left:1147px;top:686px;font-size:22px;line-height:28px;color:#8d1a1f;transform:scaleX(.84);transform-origin:left">JingweiPX.com</div>
</body></html>
